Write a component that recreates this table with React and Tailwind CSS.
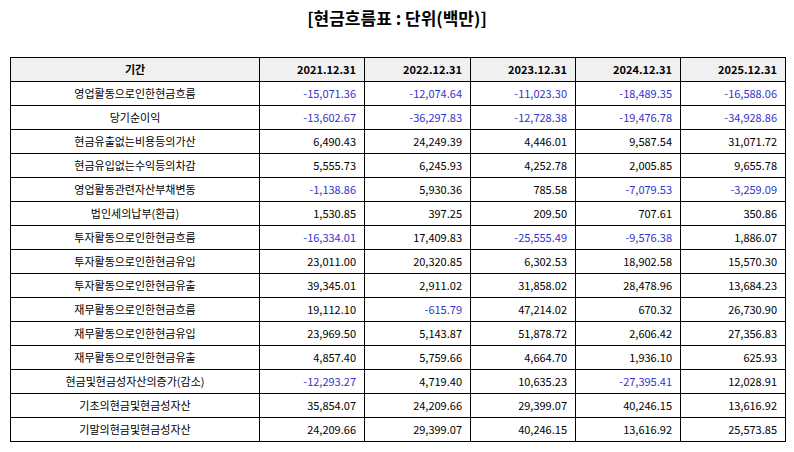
const years = ['2021.12.31', '2022.12.31', '2023.12.31', '2024.12.31', '2025.12.31']

const rows = [
  ['영업활동으로인한현금흐름', '-15,071.36', '-12,074.64', '-11,023.30', '-18,489.35', '-16,588.06'],
  ['당기순이익', '-13,602.67', '-36,297.83', '-12,728.38', '-19,476.78', '-34,928.86'],
  ['현금유출없는비용등의가산', '6,490.43', '24,249.39', '4,446.01', '9,587.54', '31,071.72'],
  ['현금유입없는수익등의차감', '5,555.73', '6,245.93', '4,252.78', '2,005.85', '9,655.78'],
  ['영업활동관련자산부채변동', '-1,138.86', '5,930.36', '785.58', '-7,079.53', '-3,259.09'],
  ['법인세의납부(환급)', '1,530.85', '397.25', '209.50', '707.61', '350.86'],
  ['투자활동으로인한현금흐름', '-16,334.01', '17,409.83', '-25,555.49', '-9,576.38', '1,886.07'],
  ['투자활동으로인한현금유입', '23,011.00', '20,320.85', '6,302.53', '18,902.58', '15,570.30'],
  ['투자활동으로인한현금유출', '39,345.01', '2,911.02', '31,858.02', '28,478.96', '13,684.23'],
  ['재무활동으로인한현금흐름', '19,112.10', '-615.79', '47,214.02', '670.32', '26,730.90'],
  ['재무활동으로인한현금유입', '23,969.50', '5,143.87', '51,878.72', '2,606.42', '27,356.83'],
  ['재무활동으로인한현금유출', '4,857.40', '5,759.66', '4,664.70', '1,936.10', '625.93'],
  ['현금및현금성자산의증가(감소)', '-12,293.27', '4,719.40', '10,635.23', '-27,395.41', '12,028.91'],
  ['기초의현금및현금성자산', '35,854.07', '24,209.66', '29,399.07', '40,246.15', '13,616.92'],
  ['기말의현금및현금성자산', '24,209.66', '29,399.07', '40,246.15', '13,616.92', '25,573.85'],
]

const cell = 'border-[1.5px] border-black'

export default function App() {
  return (
    <main className="w-[794px] h-[452px] bg-white px-[10px] pt-[7px] font-['Noto_Sans_CJK_KR',sans-serif] text-black">
      {/* Title */}
      <h1 className="text-center text-[17px] font-bold leading-[22px] h-[50px]">[현금흐름표 : 단위(백만)]</h1>

      {/* Table */}
      <table className="w-[775px] border-collapse table-fixed text-[11px]">
        <colgroup>
          <col className="w-[249px]" />
          <col className="w-[105px]" />
          <col className="w-[106px]" />
          <col className="w-[105px]" />
          <col className="w-[105px]" />
          <col className="w-[105px]" />
        </colgroup>
        <thead>
          <tr className="h-[24px] bg-[#f0f0f0]">
            <th className={cell + ' font-bold text-center'}>기간</th>
            {years.map((y) => (
              <th key={y} className={cell + ' font-bold text-right pr-[8px]'}>{y}</th>
            ))}
          </tr>
        </thead>
        <tbody>
          {rows.map(([label, ...vals]) => (
            <tr key={label} className="h-[24px]">
              <td className={cell + ' text-center'}>{label}</td>
              {vals.map((v, i) => (
                <td
                  key={i}
                  className={v.startsWith('-') ? cell + ' text-right pr-[8px] text-[#3333cc]' : cell + ' text-right pr-[8px]'}
                >
                  {v}
                </td>
              ))}
            </tr>
          ))}
        </tbody>
      </table>
    </main>
  )
}
